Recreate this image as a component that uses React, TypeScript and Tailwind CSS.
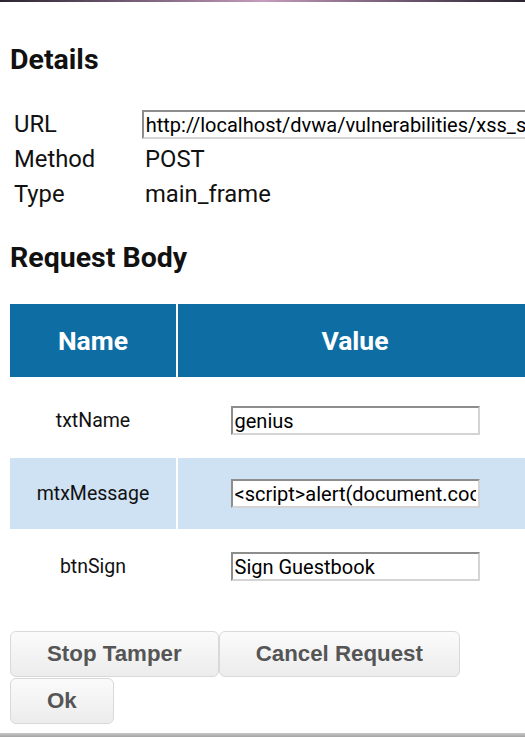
import React from 'react';

const details = [
    { label: 'URL', value: 'http://localhost/dvwa/vulnerabilities/xss_s/', input: true },
    { label: 'Method', value: 'POST', input: false },
    { label: 'Type', value: 'main_frame', input: false },
];

const params = [
    { name: 'txtName', value: 'genius', striped: false },
    { name: 'mtxMessage', value: '<script>alert(document.cookie)</script>', striped: true },
    { name: 'btnSign', value: 'Sign Guestbook', striped: false },
];

const inputClass =
    'h-[29px] bg-white px-[2px] text-[20px] text-black outline-none border-2 border-t-[#8d8d8d] border-l-[#8d8d8d] border-b-[#d4d4d4] border-r-[#d4d4d4] font-["Roboto",sans-serif]';

const TamperButton: React.FC<{ label: string }> = ({ label }) => (
    <button className="h-[46px] px-[36px] rounded-[6px] border border-[#d9d9d9] bg-gradient-to-b from-[#fbfbfb] to-[#ececec] text-[22.3px] font-bold text-[#555] font-['Liberation_Sans',Arial,sans-serif]">
        {label}
    </button>
);

export default function App() {
    return (
        <div className="w-[525px] h-[737px] overflow-hidden flex flex-col bg-white font-['Roboto',sans-serif] text-[#111]">
            <div className="h-[2px] shrink-0 bg-gradient-to-r from-[#2c2433] via-[#c59cbd] to-[#2c2433]" />

            <div className="flex-1 w-[542px] px-[10px]">
                <h2 className="mt-[43px] h-[30px] leading-[30px] text-[28.5px] font-bold">Details</h2>

                <div className="mt-[32px] flex flex-col">
                    {details.map((row) => (
                        <div key={row.label} className="h-[35px] flex items-center">
                            <span className="w-[135px] pl-[4px] text-[23.8px]">{row.label}</span>
                            {row.input ? (
                                <input readOnly value={row.value} className={`${inputClass} w-[400px]`} />
                            ) : (
                                <span className="text-[23.8px]">{row.value}</span>
                            )}
                        </div>
                    ))}
                </div>

                <h2 className="mt-[31px] h-[30px] leading-[30px] text-[28.5px] font-bold">Request Body</h2>

                <div className="mt-[31px] w-[522px]">
                    <div className="h-[73px] grid grid-cols-[166px_354px] gap-x-[2px]">
                        <div className="bg-[#0e6ea4] flex items-center justify-center text-white text-[26.5px] font-bold">Name</div>
                        <div className="bg-[#0e6ea4] flex items-center justify-center text-white text-[26.5px] font-bold">Value</div>
                    </div>
                    <div className="mt-[8px] flex flex-col gap-y-[2px]">
                        {params.map((p) => (
                            <div key={p.name} className="h-[71px] grid grid-cols-[166px_354px] gap-x-[2px]">
                                <div className={`flex items-center justify-center text-[19.5px] ${p.striped ? 'bg-[#cfe2f3]' : ''}`}>
                                    {p.name}
                                </div>
                                <div className={`flex items-center justify-center ${p.striped ? 'bg-[#cfe2f3]' : ''}`}>
                                    <input readOnly value={p.value} className={`${inputClass} w-[249px]`} />
                                </div>
                            </div>
                        ))}
                    </div>
                </div>

                <div className="mt-[29px] w-[522px] flex flex-wrap gap-y-[1px]">
                    <TamperButton label="Stop Tamper" />
                    <TamperButton label="Cancel Request" />
                    <TamperButton label="Ok" />
                </div>
            </div>

            <div className="h-[4px] shrink-0 bg-gradient-to-b from-[#c8c8c8] to-[#a3a3a3]" />
        </div>
    );
}
